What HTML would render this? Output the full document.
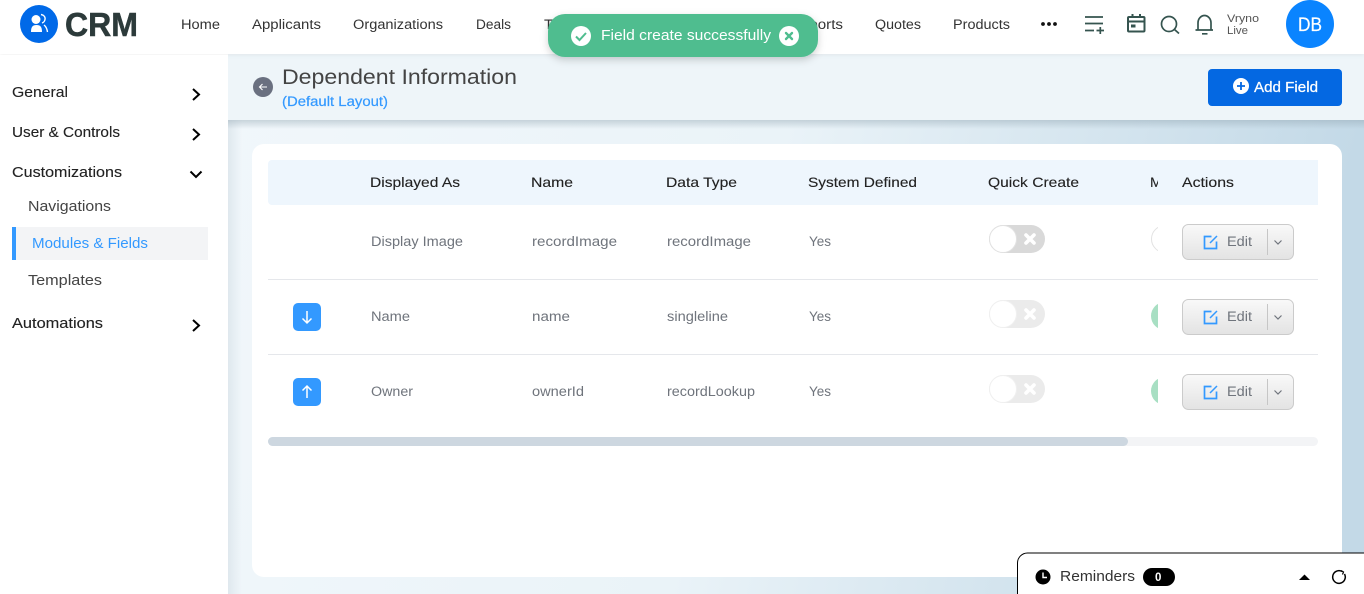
<!DOCTYPE html>
<html><head><meta charset="utf-8"><title>CRM</title>
<style>
html,body{margin:0;padding:0;width:1364px;height:594px;overflow:hidden;background:#fff}
svg{display:block}
text{font-family:"Liberation Sans",sans-serif}
.nav{font-size:13.5px;fill:#333}
.side{font-size:14.5px;fill:#222;stroke:#222;stroke-width:.12px}
.sub{font-size:14.5px;fill:#444}
.th{font-size:14px;fill:#222;stroke:#222;stroke-width:.12px}
.td{font-size:13.5px;fill:#6f747c}
.ed{font-size:13.5px;fill:#6f747c}
</style></head><body>
<svg width="1364" height="594" viewBox="0 0 1364 594" xmlns="http://www.w3.org/2000/svg">
<defs>
<linearGradient id="bg" x1="0" y1="0" x2="1" y2="0.12"><stop offset="0" stop-color="#f1f7fb"/><stop offset=".5" stop-color="#eaf3f8"/><stop offset="1" stop-color="#c3d9e7"/></linearGradient>
<linearGradient id="sh" x1="0" y1="0" x2="1" y2="0"><stop offset="0" stop-color="#dfe8ee"/><stop offset="1" stop-color="#dfe8ee" stop-opacity="0"/></linearGradient>
<linearGradient id="shd" x1="0" y1="0" x2="0" y2="1"><stop offset="0" stop-color="#8fa3af" stop-opacity=".42"/><stop offset="1" stop-color="#8fa3af" stop-opacity="0"/></linearGradient>
<linearGradient id="btn" x1="0" y1="0" x2="0" y2="1"><stop offset="0" stop-color="#f9f9f9"/><stop offset="1" stop-color="#e3e3e3"/></linearGradient>
<filter id="toast" x="-10%" y="-30%" width="120%" height="170%"><feDropShadow dx="0" dy="3" stdDeviation="4" flood-color="#000" flood-opacity=".18"/></filter>
<filter id="navs" x="-2%" y="-10%" width="104%" height="130%"><feDropShadow dx="0" dy="1" stdDeviation="2" flood-color="#000" flood-opacity=".06"/></filter>
<clipPath id="mc"><rect x="1150" y="160" width="8" height="260"/></clipPath>
<g id="tg"><rect x="0" y="0" width="56" height="28" rx="14" fill="#d9d9d9"/><circle cx="14" cy="14" r="13.5" fill="#fff" stroke="#e2e2e2"/><path d="M37 10l8 8M45 10l-8 8" stroke="#fff" stroke-width="3.6" stroke-linecap="round"/></g>
<g id="edit">
<rect x=".5" y=".5" width="111" height="35" rx="6" fill="url(#btn)" stroke="#cbcbcb"/>
<path d="M29.500 12.500H22.500V24.500H34.500V17.500" fill="none" stroke="#3399ff" stroke-width="1.700"/>
<path d="M28 19L35 12" fill="none" stroke="#3399ff" stroke-width="1.500"/>
<text class="ed" x="45" y="22" textLength="25" lengthAdjust="spacingAndGlyphs">Edit</text>
<path d="M85.500 5V31" stroke="#c6c6c6"/>
<path d="M92.500 16.500l3.500 3.500 3.500-3.500" fill="none" stroke="#6f747c" stroke-width="1.200"/>
</g>
</defs>

<!-- background -->
<rect x="228" y="54" width="1136" height="540" fill="url(#bg)"/>
<rect x="228" y="54" width="14" height="540" fill="url(#sh)"/>
<rect x="228" y="120" width="1136" height="9" fill="url(#shd)"/>
<rect x="228" y="54" width="1136" height="66" fill="#eef5f9"/>

<!-- top bar -->
<rect x="0" y="0" width="1364" height="54" fill="#fff" filter="url(#navs)"/>
<circle cx="39" cy="24" r="19" fill="#0069e8"/>
<circle cx="36" cy="19.500" r="4.500" fill="#fff"/>
<path d="M31 32c0-5 1.500-7 5.500-7s5.500 2 5.500 7z" fill="#fff"/>
<path d="M41 14.500c3 .5 4.500 2.500 4 5s-1.500 3-3 3.500M44 25c2 1.500 3 3.500 3.500 7" fill="none" stroke="#fff" stroke-width="1.400"/>
<text x="65" y="36" font-size="33" font-weight="700" fill="#2c3a3a" stroke="#2c3a3a" stroke-width=".5" textLength="73" lengthAdjust="spacingAndGlyphs">CRM</text>

<text class="nav" x="181" y="29" textLength="39" lengthAdjust="spacingAndGlyphs">Home</text>
<text class="nav" x="252" y="29" textLength="69" lengthAdjust="spacingAndGlyphs">Applicants</text>
<text class="nav" x="353" y="29" textLength="90" lengthAdjust="spacingAndGlyphs">Organizations</text>
<text class="nav" x="476" y="29" textLength="35" lengthAdjust="spacingAndGlyphs">Deals</text>
<text class="nav" x="544" y="29" textLength="38" lengthAdjust="spacingAndGlyphs">Tasks</text>
<text class="nav" x="790" y="29" textLength="53" lengthAdjust="spacingAndGlyphs">Reports</text>
<text class="nav" x="875" y="29" textLength="46" lengthAdjust="spacingAndGlyphs">Quotes</text>
<text class="nav" x="953" y="29" textLength="57" lengthAdjust="spacingAndGlyphs">Products</text>
<circle cx="1043" cy="24" r="1.900" fill="#111"/><circle cx="1049" cy="24" r="1.900" fill="#111"/><circle cx="1055" cy="24" r="1.900" fill="#111"/>

<!-- action icons -->
<g fill="none" stroke="#35544f" stroke-width="1.700">
<path d="M1085 17H1103M1085 23.500H1103M1085 30.500H1094M1096.500 30.500H1104M1100.300 27V34"/>
<rect x="1128" y="17" width="16.500" height="14.500" rx="1" stroke-width="2"/>
<path d="M1128 21.500H1144.500M1132.500 14V18M1140 14V18" stroke-width="2"/>
<circle cx="1169" cy="24" r="7.500"/>
<path d="M1174.500 29.500L1179 33.500"/>
<path d="M1198 29.500V23a6.500 7.500 0 0 1 13 0V29.500M1195.500 30H1213M1202 33.800H1207.500"/>
</g>
<rect x="1131" y="24.500" width="4.500" height="3" fill="#35544f"/>
<text x="1227" y="22" font-size="11" fill="#555" textLength="32" lengthAdjust="spacingAndGlyphs">Vryno</text>
<text x="1227" y="34" font-size="11" fill="#555" textLength="21" lengthAdjust="spacingAndGlyphs">Live</text>
<circle cx="1310" cy="24" r="24" fill="#0a84ff"/>
<text x="1298" y="31" font-size="19" fill="#fff" stroke="#fff" stroke-width=".2" textLength="24" lengthAdjust="spacingAndGlyphs">DB</text>

<!-- sidebar -->
<rect x="0" y="55" width="228" height="539" fill="#fff"/>
<text class="side" x="12" y="97" textLength="56" lengthAdjust="spacingAndGlyphs">General</text>
<text class="side" x="12" y="137" textLength="108" lengthAdjust="spacingAndGlyphs">User &amp; Controls</text>
<text class="side" x="12" y="177" textLength="110" lengthAdjust="spacingAndGlyphs">Customizations</text>
<text class="sub" x="28" y="211" textLength="83" lengthAdjust="spacingAndGlyphs">Navigations</text>
<rect x="12" y="227" width="196" height="33" fill="#f3f4f6"/>
<rect x="12" y="227" width="4" height="33" fill="#3399ff"/>
<text x="32" y="248" font-size="14.500" fill="#3399ff" textLength="116" lengthAdjust="spacingAndGlyphs">Modules &amp; Fields</text>
<text class="sub" x="28" y="285" textLength="74" lengthAdjust="spacingAndGlyphs">Templates</text>
<text class="side" x="12" y="328" textLength="91" lengthAdjust="spacingAndGlyphs">Automations</text>
<g fill="none" stroke="#000" stroke-width="2">
<path d="M193 89l6 5.500-6 5.500M193 129l6 5.500-6 5.500M193 320l6 5.500-6 5.500M190.500 171.500l5.500 5.500 5.500-5.500"/>
</g>

<!-- page header -->
<circle cx="263" cy="87" r="10" fill="#6a7080"/>
<path d="M267 87H259.500M262.500 84L259.500 87l3 3" fill="none" stroke="#fff" stroke-width="1.100"/>
<text x="282" y="84" font-size="21" fill="#444" textLength="235" lengthAdjust="spacingAndGlyphs">Dependent Information</text>
<text x="282" y="106" font-size="13.500" fill="#3399ff" stroke="#3399ff" stroke-width=".2" textLength="106" lengthAdjust="spacingAndGlyphs">(Default Layout)</text>
<rect x="1208" y="69" width="134" height="37" rx="4" fill="#0468e2"/>
<circle cx="1241" cy="86" r="8" fill="#fff"/>
<path d="M1241 82V90M1237 86H1245" stroke="#0468e2" stroke-width="1.800"/>
<text x="1254" y="92" font-size="14.500" fill="#fff" stroke="#fff" stroke-width=".25" textLength="64" lengthAdjust="spacingAndGlyphs">Add Field</text>

<!-- card -->
<rect x="252" y="144" width="1090" height="433" rx="12" fill="#fff"/>
<rect x="268" y="160" width="1050" height="45" rx="4" fill="#eef6fd"/>
<rect x="1158" y="160" width="160" height="45" fill="#eef6fd"/>
<text class="th" x="370" y="187" textLength="90" lengthAdjust="spacingAndGlyphs">Displayed As</text>
<text class="th" x="531" y="187" textLength="42" lengthAdjust="spacingAndGlyphs">Name</text>
<text class="th" x="666" y="187" textLength="71" lengthAdjust="spacingAndGlyphs">Data Type</text>
<text class="th" x="808" y="187" textLength="109" lengthAdjust="spacingAndGlyphs">System Defined</text>
<text class="th" x="988" y="187" textLength="91" lengthAdjust="spacingAndGlyphs">Quick Create</text>
<g clip-path="url(#mc)">
<text class="th" x="1150" y="187" textLength="12" lengthAdjust="spacingAndGlyphs">M</text>
<circle cx="1165" cy="239" r="13.500" fill="#fff" stroke="#e2e2e2"/>
<circle cx="1165" cy="316" r="14" fill="#a8dfc3"/>
<circle cx="1165" cy="391" r="14" fill="#a8dfc3"/>
</g>
<text class="th" x="1182" y="187" textLength="52" lengthAdjust="spacingAndGlyphs">Actions</text>

<path d="M268 279.500H1318M268 354.500H1318" stroke="#e5e7eb"/>

<text class="td" x="371" y="246" textLength="92" lengthAdjust="spacingAndGlyphs">Display Image</text>
<text class="td" x="532" y="246" textLength="85" lengthAdjust="spacingAndGlyphs">recordImage</text>
<text class="td" x="667" y="246" textLength="84" lengthAdjust="spacingAndGlyphs">recordImage</text>
<text class="td" x="809" y="246" textLength="22" lengthAdjust="spacingAndGlyphs">Yes</text>

<text class="td" x="371" y="321" textLength="39" lengthAdjust="spacingAndGlyphs">Name</text>
<text class="td" x="532" y="321" textLength="38" lengthAdjust="spacingAndGlyphs">name</text>
<text class="td" x="667" y="321" textLength="61" lengthAdjust="spacingAndGlyphs">singleline</text>
<text class="td" x="809" y="321" textLength="22" lengthAdjust="spacingAndGlyphs">Yes</text>

<text class="td" x="371" y="396" textLength="42" lengthAdjust="spacingAndGlyphs">Owner</text>
<text class="td" x="532" y="396" textLength="52" lengthAdjust="spacingAndGlyphs">ownerId</text>
<text class="td" x="667" y="396" textLength="88" lengthAdjust="spacingAndGlyphs">recordLookup</text>
<text class="td" x="809" y="396" textLength="22" lengthAdjust="spacingAndGlyphs">Yes</text>

<rect x="293" y="303" width="28" height="28" rx="5" fill="#3399ff"/>
<path d="M307 311V323M302.500 318.500L307 323l4.500-4.500" fill="none" stroke="#fff" stroke-width="1.500"/>
<rect x="293" y="378" width="28" height="28" rx="5" fill="#3399ff"/>
<path d="M307 398V386M302.500 390.500L307 386l4.500 4.500" fill="none" stroke="#fff" stroke-width="1.500"/>

<use href="#tg" x="989" y="225"/>
<use href="#tg" x="989" y="300" opacity=".5"/>
<use href="#tg" x="989" y="375" opacity=".5"/>
<use href="#edit" x="1182" y="224"/>
<use href="#edit" x="1182" y="299"/>
<use href="#edit" x="1182" y="374"/>

<rect x="268" y="437" width="1050" height="9" rx="4.500" fill="#f3f4f6"/>
<rect x="268" y="437" width="860" height="9" rx="4.500" fill="#cdd7e0"/>

<!-- toast -->
<rect x="548" y="14" width="270" height="43" rx="17" fill="#4fbd8f" filter="url(#toast)"/>
<circle cx="581" cy="36" r="10" fill="#fff"/>
<path d="M576 36.500l3.500 3.500 6.500-7" fill="none" stroke="#4fbd8f" stroke-width="2"/>
<text x="601" y="40" font-size="14.500" fill="#fff" textLength="170" lengthAdjust="spacingAndGlyphs">Field create successfully</text>
<circle cx="789" cy="36" r="10" fill="#fff"/>
<path d="M786 33l6 6M792 33l-6 6" stroke="#4fbd8f" stroke-width="2.400" stroke-linecap="round"/>

<!-- reminders -->
<path d="M1017.500 600V563a10 10 0 0 1 10-10H1370V600z" fill="#fff" stroke="#000"/>
<circle cx="1043" cy="577" r="7.500" fill="#000"/>
<path d="M1043 572.500V577.500H1047" fill="none" stroke="#fff" stroke-width="1.400"/>
<text x="1060" y="581" font-size="14.500" fill="#333" textLength="75" lengthAdjust="spacingAndGlyphs">Reminders</text>
<rect x="1143" y="568" width="32" height="18" rx="9" fill="#000"/>
<text x="1155" y="581" font-size="11.500" font-weight="700" fill="#fff">0</text>
<path d="M1299 580L1304.500 574.500L1310 580z" fill="#000"/>
<path d="M1344.500 574a6.300 6.300 0 1 1-2.500-2.500" fill="none" stroke="#000" stroke-width="1.500"/>
<path d="M1341 570.500l2.500 1.500-1 2.500" fill="none" stroke="#000" stroke-width="1.200"/>
</svg>
</body></html>
